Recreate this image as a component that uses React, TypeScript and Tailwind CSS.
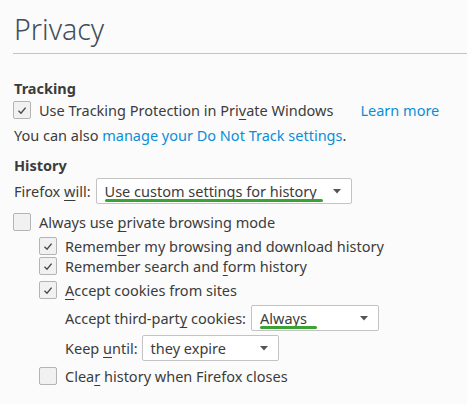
import React from 'react';

const Check = ({ checked }: { checked?: boolean }) => (
  <span className="flex h-[18px] w-[18px] shrink-0 items-center justify-center rounded-[2px] border border-[#b4b4b4] bg-[#f1f1f1]">
    {checked && (
      <svg width="10" height="9" viewBox="0 0 10 9" fill="none">
        <path d="M1.5 4.8 L4 7.2 L8.6 1.6" stroke="#4a4a4a" strokeWidth="1.4" />
      </svg>
    )}
  </span>
);

const Key = ({ children }: { children: React.ReactNode }) => (
  <span className="underline decoration-1 underline-offset-[3px]">{children}</span>
);

const Arrow = () => (
  <svg width="8" height="5" viewBox="0 0 8 5" className="shrink-0">
    <path d="M0 0 H8 L4 4.5 Z" fill="#555" />
  </svg>
);

const Select = ({
  label,
  width,
  mark,
}: {
  label: string;
  width: string;
  mark?: string;
}) => (
  <div className={`flex h-[26px] items-center justify-between rounded-[2px] border border-[#c3c3c3] bg-white pl-[8px] pr-[10px] ${width}`}>
    <span className="relative">
      {label}
      {mark && <span className={`absolute left-0 top-[18px] h-[3px] rounded-full bg-[#3ba234] ${mark}`} />}
    </span>
    <Arrow />
  </div>
);

const Row = ({
  checked,
  children,
  className = '',
}: {
  checked?: boolean;
  children: React.ReactNode;
  className?: string;
}) => (
  <div className={`flex items-center gap-[8px] ${className}`}>
    <Check checked={checked} />
    <span>{children}</span>
  </div>
);

export default function App() {
  return (
    <div
      className="min-h-[404px] w-[467px] bg-[#fbfbfb] pl-[13px] pt-[9px] text-[14.5px] leading-[20px] text-[#3c3c3c]"
      style={{ fontFamily: '"Noto Sans", "Open Sans", sans-serif' }}
    >
      <h1 className="pl-[1px] text-[28.5px] font-light leading-[40px] text-[#424e5a]">Privacy</h1>
      <div className="mt-[4px] h-px bg-[#c4c4c4]" />

      <h2 className="mt-[24px] pl-[1px] font-bold">Tracking</h2>
      <div className="mt-[2px] flex items-center">
        <Row checked>
          Use Tracking Protection in Pri<Key>v</Key>ate Windows
        </Row>
        <a className="ml-[27px] text-[#0a8ed8]">Learn more</a>
      </div>
      <p className="mt-[5px] pl-[1px]">
        You can also <a className="text-[#0a8ed8]">manage your Do Not Track settings</a>.
      </p>

      <h2 className="mt-[10px] pl-[1px] font-bold">History</h2>
      <div className="mt-[3px] flex items-center gap-[5px] pl-[1px]">
        <span>
          Firefox <Key>w</Key>ill:
        </span>
        <Select label="Use custom settings for history" width="w-[256px]" mark="w-[218px]" />
      </div>

      <Row className="mt-[8px]">
        Always use <Key>p</Key>rivate browsing mode
      </Row>
      <div className="pl-[26px]">
        <Row checked className="mt-[4px]">
          Remem<Key>b</Key>er my browsing and download history
        </Row>
        <Row checked className="mt-0">
          Remember search and <Key>f</Key>orm history
        </Row>
        <Row checked className="mt-[4px]">
          <Key>A</Key>ccept cookies from sites
        </Row>
        <div className="mt-[5px] flex items-center gap-[5px] pl-[26px]">
          <span>
            Accept third-part<Key>y</Key> cookies:
          </span>
          <Select label="Always" width="w-[128px]" mark="w-[57px]" />
        </div>
        <div className="mt-[4px] flex items-center gap-[4px] pl-[26px]">
          <span>
            Keep <Key>u</Key>ntil:
          </span>
          <Select label="they expire" width="w-[137px]" />
        </div>
        <Row className="mt-[5px]">
          Clea<Key>r</Key> history when Firefox closes
        </Row>
      </div>
    </div>
  );
}
